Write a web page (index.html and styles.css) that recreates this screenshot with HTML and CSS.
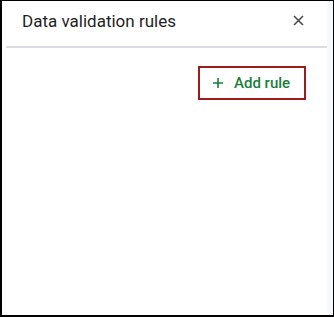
FILE: index.html
```html
<!DOCTYPE html>
<html lang="en">
<head>
    <meta charset="UTF-8">
    <meta name="viewport" content="width=device-width, initial-scale=1.0">
    <title>Data validation rules</title>
    <link rel="stylesheet" href="styles.css">
</head>
<body>

    <div class="frame">
        <div class="panel">
            <div class="panel-header">
                <span class="panel-title">Data validation rules</span>
                <button class="close-btn" aria-label="Close">
                    <svg width="11" height="11" viewBox="0 0 11 11">
                        <path d="M1 1 L10 10 M10 1 L1 10" stroke="#444746" stroke-width="1.5" fill="none"/>
                    </svg>
                </button>
            </div>
            <div class="panel-body">
                <button class="add-rule">
                    <svg width="10" height="10" viewBox="0 0 10 10">
                        <path d="M5 0 V10 M0 5 H10" stroke="#188038" stroke-width="1.6" fill="none"/>
                    </svg>
                    <span>Add rule</span>
                </button>
            </div>
        </div>
        <div class="scroll-track"></div>
    </div>

</body>
</html>
```

FILE: styles.css
```css
/* Outer frame and panel */
body {
    margin: 0;
    background-color: #ffffff;
    font-family: 'Roboto', 'Liberation Sans', sans-serif;
}

.frame {
    width: 334px;
    height: 317px;
    box-sizing: border-box;
    border: 1px solid #000000;
    border-left-width: 2px;
    border-bottom-width: 2px;
    display: flex;
    background-color: #ffffff;
}

.panel {
    flex: 1;
    display: flex;
    flex-direction: column;
    padding-left: 4px;
}

.scroll-track {
    width: 6px;
    background-color: #f8f9fc;
}

.panel-header {
    height: 47px;
    display: flex;
    align-items: center;
    justify-content: space-between;
    padding: 0 23px 6px 16px;
    box-sizing: border-box;
    border-bottom: 2px solid #dcdce2;
}

.panel-title {
    font-size: 17px;
    color: #1f1f1f;
}

.close-btn {
    border: none;
    background: none;
    padding: 0;
    width: 11px;
    height: 11px;
    display: flex;
    cursor: pointer;
}

.panel-body {
    display: flex;
    justify-content: flex-end;
    padding: 18px 21px 0 0;
}

.add-rule {
    display: flex;
    align-items: center;
    gap: 11px;
    width: 108px;
    height: 34px;
    box-sizing: border-box;
    padding: 0 0 0 13px;
    border: 2px solid #9c1b1b;
    background-color: #ffffff;
    color: #188038;
    font-family: 'Roboto', 'Liberation Sans', sans-serif;
    font-size: 15px;
    font-weight: 500;
    cursor: pointer;
}
```
